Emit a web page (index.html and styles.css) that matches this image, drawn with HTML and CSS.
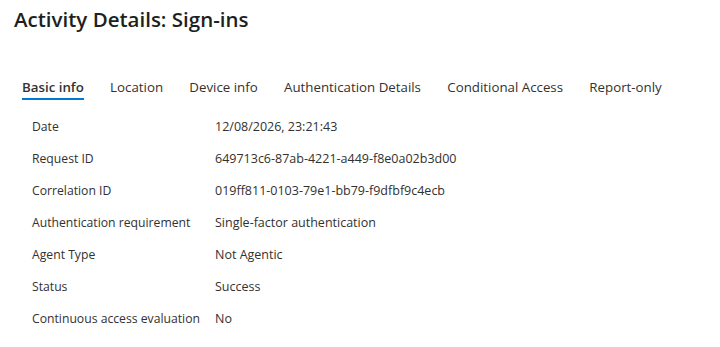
FILE: index.html
```html
<!DOCTYPE html>
<html>
<head>
<meta charset="utf-8">
<link rel="stylesheet" href="styles.css">
</head>
<body>
<div class="page">
  <h1 class="title">Activity Details: Sign-ins</h1>
  <nav class="tabs">
    <div class="tab active">Basic info</div>
    <div class="tab">Location</div>
    <div class="tab">Device info</div>
    <div class="tab">Authentication Details</div>
    <div class="tab">Conditional Access</div>
    <div class="tab">Report-only</div>
  </nav>
  <div class="details">
    <div class="row"><div class="label">Date</div><div class="value">12/08/2026, 23:21:43</div></div>
    <div class="row"><div class="label">Request ID</div><div class="value">649713c6-87ab-4221-a449-f8e0a02b3d00</div></div>
    <div class="row"><div class="label">Correlation ID</div><div class="value">019ff811-0103-79e1-bb79-f9dfbf9c4ecb</div></div>
    <div class="row"><div class="label">Authentication requirement</div><div class="value">Single-factor authentication</div></div>
    <div class="row"><div class="label">Agent Type</div><div class="value">Not Agentic</div></div>
    <div class="row"><div class="label">Status</div><div class="value">Success</div></div>
    <div class="row"><div class="label">Continuous access evaluation</div><div class="value">No</div></div>
  </div>
</div>
</body>
</html>
```

FILE: styles.css
```css
* { box-sizing: border-box; }
body {
  margin: 0;
  background: #ffffff;
  font-family: "Open Sans", "Noto Sans", sans-serif;
  color: #323130;
}
.page {
  padding: 5px 0 0 14px;
}
.title {
  margin: 0;
  font-size: 20.5px;
  line-height: 28px;
  font-weight: 600;
  color: #201f1e;
}
.tabs {
  display: flex;
  gap: 26.3px;
  margin-top: 44px;
  padding-left: 8px;
}
.tab {
  font-size: 13.3px;
  line-height: 20px;
  padding-bottom: 1px;
  border-bottom: 2px solid transparent;
  color: #323130;
}
.tab.active {
  font-weight: 600;
  border-bottom-color: #0078d4;
}
.details {
  margin-top: 10px;
  padding-left: 18px;
}
.row {
  display: flex;
  height: 32px;
  align-items: center;
  font-size: 12.5px;
}
.label {
  width: 183px;
  flex-shrink: 0;
  font-size: 12.2px;
}
```
